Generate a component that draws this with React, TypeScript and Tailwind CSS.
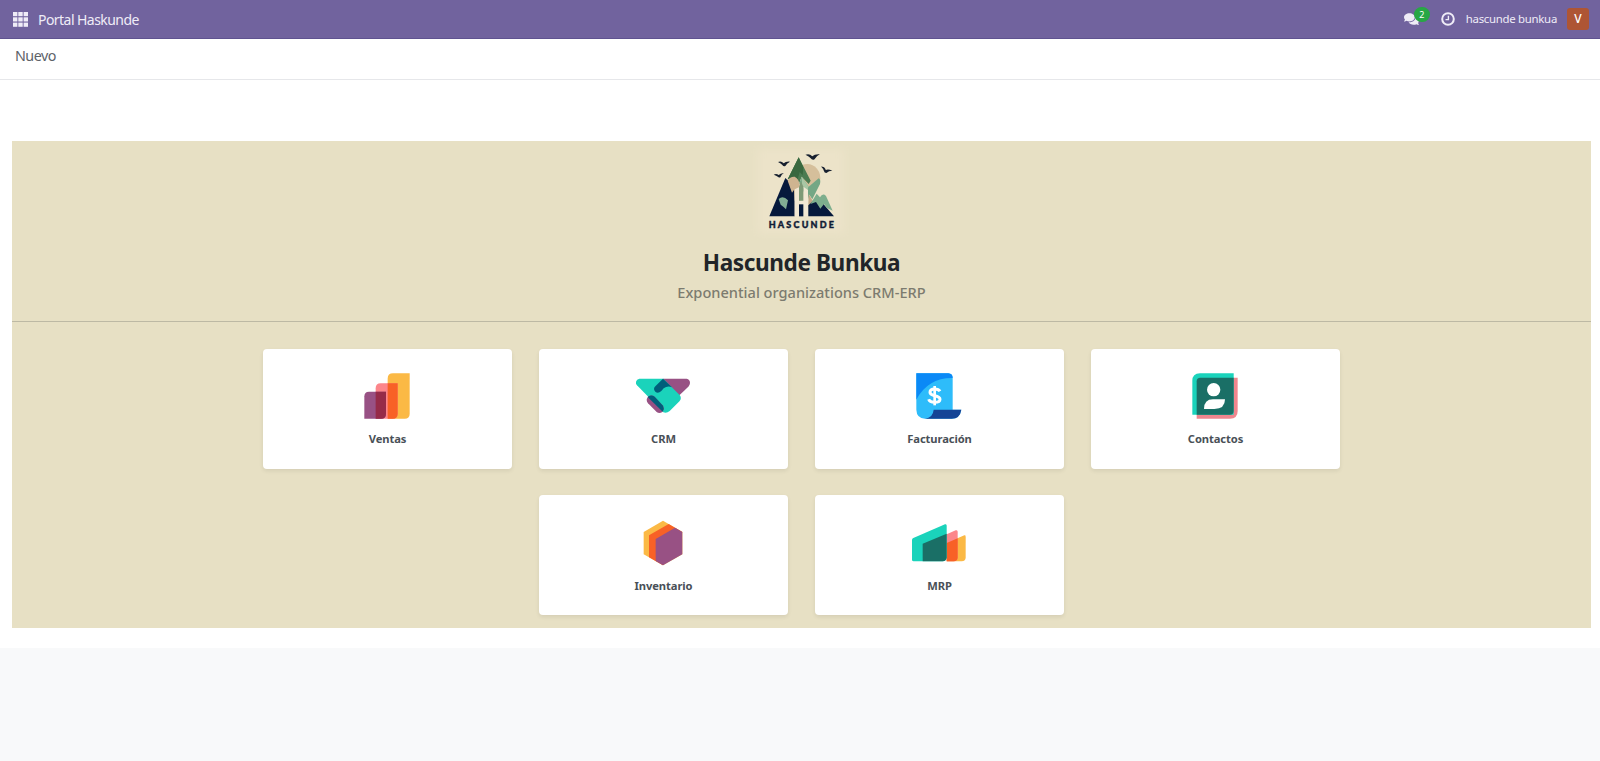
import type { ReactNode } from "react";
import { FaComments } from "react-icons/fa";

function Logo() {
  const bird = "M-18 -5 Q-8 -9 -1 -1 Q5 -7 18 -6 Q9 -2 4 7 Q-2 9 -5 4 Q-9 -1 -18 -5Z";
  return (
    <svg className="mr-px h-[100px] w-[100px]" viewBox="35 3 300 300" aria-label="Hascunde">
      <defs>
        <filter id="soft" x="-10%" y="-10%" width="120%" height="120%">
          <feGaussianBlur stdDeviation="12" />
        </filter>
      </defs>
      <rect x="56" y="26" width="258" height="254" fill="#ece3c9" filter="url(#soft)" />
      <path d="M188 75 Q215 66 233 86 Q246 102 242 122 L207 142 L186 110Z" fill="#d5bf9b" />
      <path d="M178 52 L145 118 L164 112 L180 128 L187 110 L208 132 L214 122Z" fill="#4b7b51" />
      <path d="M178 52 L145 118 L164 112 L175 118 L181 96 L190 106 L192 82Z" fill="#39683f" />
      <path d="M138 114 L90 229 L166 229 L166 140Z" fill="#06193c" />
      <path d="M145 122 Q152 109 166 110 Q180 116 182 140 L186 182 H166 L164 150 L158 158Z" fill="#cfb490" />
      <path d="M187 110 L208 140 L238 115 Q245 118 242 132 L219 178 L210 164 L206 178 L190 150 L180 130Z" fill="#74a785" />
      <path d="M187 110 L207 139 L204 160 L188 138Z" fill="#a9c7a5" />
      <path d="M208 162 L220 182 L207 204Z" fill="#c2a988" />
      <path d="M207 196 L224 180 L240 178 L284 229 H207Z" fill="#06193c" />
      <path d="M213 192 L222 178 L232 161 L242 172 Q250 158 260 168 L280 212 L263 204 L254 192 L243 206 L230 186Z" fill="#7dae8d" />
      <path d="M118 177 Q131 165 146 181 L140 208 L132 200 L124 194Z" fill="#82ae94" />
      <path d="M166 148 L179 142 V182 H192 V140 L206 150 V229 H192 V193 H179 V229 H166Z" fill="#f2e8d4" />
      <path d="M179 142 L185 124 L192 140 V182 H179Z" fill="#7f9a77" />
      <path d="M179 193 H192 V229 H179Z" fill="#06193c" />
      <g fill="#17202f">
        <path d={bird} transform="translate(134 71)" />
        <path d={bird} transform="translate(220 50) scale(1.2)" />
        <path d={bird} transform="translate(119 106) scale(.85) rotate(-8)" />
        <path d={bird} transform="translate(260 91) rotate(22)" />
      </g>
      <text
        x="88" y="265" textLength="196" lengthAdjust="spacing" fontSize="27" fontWeight="900"
        fill="#111c36" fontFamily="Lato, 'Open Sans', sans-serif" stroke="#111c36" strokeWidth="1.2"
      >
        HASCUNDE
      </text>
    </svg>
  );
}

function SalesIcon() {
  return (
    <svg className="size-[54px]" viewBox="331 88 162 162">
      <path d="M430 101 H480 V222 Q480 237 465 237 H414 V117 Q414 101 430 101Z" fill="#fbb945" />
      <path d="M393 131 H444 V222 Q444 237 429 237 H378 V146 Q378 131 393 131Z" fill="#fc868b" />
      <path d="M414 131 H444 V222 Q444 237 429 237 H414Z" fill="#f86126" />
      <path d="M358 156 H409 V222 Q409 237 394 237 H344 V170 Q344 156 358 156Z" fill="#985184" />
      <path d="M378 156 H409 V222 Q409 237 394 237 H378Z" fill="#962b48" />
    </svg>
  );
}

function CrmIcon() {
  return (
    <svg className="size-[54px]" viewBox="109 58 162 162">
      <path d="M190 87 H261 Q271 89 271 100 Q271 105 266 111 L236 140Z" fill="#985184" />
      <path d="M119 87 H191 L240 136 Q247 145 240 154 L210 184 Q201 192 191 188 L112 107 Q108 102 109 96 Q111 88 119 87Z" fill="#1ad3bb" />
      <path d="M145 141 Q155 134 165 141 L190 168 Q196 178 188 187 Q179 193 171 187 L145 161 Q137 151 145 141Z" fill="#985184" />
      <path d="M145 141 Q155 134 165 141 L190 168 Q195 177 189 186 L144 142Z" fill="#005e7a" />
      <path d="M190 87 L217 113 Q204 107 192 116 L185 124 Q175 133 167 126 Q159 118 167 110Z" fill="#005e7a" />
    </svg>
  );
}

function InvoicingIcon() {
  return (
    <svg className="size-[54px]" viewBox="97 58 162 162">
      <path d="M110 71 H206 Q219 72 219 85 V180 H245 Q240 207 216 207 H136 Q111 206 110 180Z" fill="#2ebcfa" />
      <path d="M110 71 H206 Q219 72 219 85 Q145 84 110 150Z" fill="#0b89f6" />
      <path d="M162 180 H245 Q241 207 216 207 H136 Q160 204 162 180Z" fill="#144496" />
      <g fill="none" stroke="#fff" strokeWidth="9">
        <path d="M181 125 Q177 118 165 118 Q151 118 151 128 Q151 135 165 138 Q181 141 181 149 Q181 158 165 158 Q150 158 147 149" />
        <path d="M165 109 V167" strokeWidth="8" />
      </g>
    </svg>
  );
}

function ContactsIcon() {
  return (
    <svg className="size-[54px]" viewBox="115 58 162 162">
      <path d="M141 84 H264 V184 Q264 207 241 207 H141Z" fill="#f0868e" />
      <path d="M151 71 H252 V195 H128 V94 Q128 71 151 71Z" fill="#1ad3bb" />
      <path d="M152 84 H252 V183 Q252 195 240 195 H141 V95 Q141 84 152 84Z" fill="#1a6f66" />
      <circle cx="192" cy="120" r="20" fill="#fff" />
      <path d="M190 149 H226 Q226 178 194 178 H163 Q163 149 190 149Z" fill="#fff" />
    </svg>
  );
}

function InventoryIcon() {
  return (
    <svg className="size-[54px]" viewBox="109 77 162 162">
      <path d="M190 91 L248 125 V192 L190 225 L132 192 V125Z" fill="#fbb945" />
      <path d="M207 101 L248 125 L190 225 L148 201 V135Z" fill="#f86126" />
      <path d="M226 112 L248 125 V192 L190 225 L168 212 V146Z" fill="#985184" />
    </svg>
  );
}

function MrpIcon() {
  return (
    <svg className="size-[54px]" viewBox="97 77 162 162">
      <path d="M201 158 L254 135 Q258 134 258 139 V201 Q258 213 246 213 H201Z" fill="#fbb945" />
      <path d="M201 132 L228 120 Q234 118 234 124 V201 Q234 213 222 213 H201Z" fill="#fc868b" />
      <path d="M201 158 L234 144 V201 Q234 213 222 213 H201Z" fill="#f86126" />
      <path d="M101 143 L196 102 Q201 100 201 106 V201 Q200 213 189 213 H102 Q97 213 97 208 V149 Q97 145 101 143Z" fill="#1ad3bb" />
      <path d="M129 160 L201 130 V201 Q200 213 189 213 H129Z" fill="#1a6f66" />
    </svg>
  );
}

function AppCard({ label, icon }: { label: string; icon: ReactNode }) {
  return (
    <a className="flex h-[119.5px] w-[249.5px] flex-col items-center rounded-[4px] bg-white pt-[20.4px] shadow-[0_2px_4px_rgba(0,0,0,0.08)]">
      <span className="mr-px">{icon}</span>
      <span className="mt-[7px] text-[11.2px] leading-[18px] font-bold tracking-[-0.1px] text-[#495057]">{label}</span>
    </a>
  );
}

function NavBar() {
  return (
    <header className="flex h-[39px] items-center border-b border-[#5f5390] bg-[#71639e] pr-[11px] pl-[13px] text-[#efecf7]">
      <svg className="size-[15px]" viewBox="0 0 15 15" fill="currentColor">
        {[0, 5.3, 10.6].map((y) =>
          [0, 5.3, 10.6].map((x) => <rect key={`${x}-${y}`} x={x} y={y} width="4.4" height="4.2" />),
        )}
      </svg>
      <span className="ml-[10px] pt-px text-[14px] tracking-[-0.55px]">Portal Haskunde</span>
      <div className="ml-auto flex items-center">
        <div className="relative">
          <FaComments className="h-[14px] w-[15px]" />
          <span className="absolute -top-[5px] left-[10px] flex h-[15px] w-[16px] items-center justify-center rounded-full bg-[#28a745] text-[9px] text-white">
            2
          </span>
        </div>
        <svg className="ml-[22px] size-[14px]" viewBox="0 0 14 14" fill="none" stroke="currentColor">
          <circle cx="7" cy="7" r="5.8" strokeWidth="2" />
          <path d="M7.4 3.8 V7.6 H4.5" strokeWidth="1.4" />
        </svg>
        <span className="ml-[11px] text-[11.4px] tracking-[-0.28px]">hascunde bunkua</span>
        <span className="ml-[10px] flex size-[22px] items-center justify-center rounded-[3px] bg-[#ae5534] text-[12px] font-medium text-white">V</span>
      </div>
    </header>
  );
}

export default function App() {
  return (
    <div className="flex h-[761px] flex-col overflow-hidden bg-[#f8f9fa] font-['Noto_Sans','Open_Sans',sans-serif]">
      <NavBar />
      <div className="h-[41px] border-b border-[#e6e7ea] bg-white pt-[5px] pl-[15px] text-[14.3px] leading-6 tracking-[-0.5px] text-[#5d6268]">
        Nuevo
      </div>
      <main className="bg-white pt-[61px] pr-[9px] pb-5 pl-3">
        <section className="flex h-[487px] flex-col items-center bg-[#e7e0c4]">
          <Logo />
          <h1 className="mt-[4px] text-[22.6px] leading-9 font-bold tracking-[-0.4px] text-[#212529]">Hascunde Bunkua</h1>
          <h2 className="mt-px text-[14.6px] leading-5 font-medium tracking-normal text-[#7c7b6f]">Exponential organizations CRM-ERP</h2>
          <hr className="mt-[19px] w-full border-[#bdb9a4]" />
          <div className="mt-[27px] flex w-[1104px] flex-wrap justify-center gap-x-[26.5px] gap-y-[26.7px]">
            <AppCard label="Ventas" icon={<SalesIcon />} />
            <AppCard label="CRM" icon={<CrmIcon />} />
            <AppCard label="Facturación" icon={<InvoicingIcon />} />
            <AppCard label="Contactos" icon={<ContactsIcon />} />
            <AppCard label="Inventario" icon={<InventoryIcon />} />
            <AppCard label="MRP" icon={<MrpIcon />} />
          </div>
        </section>
      </main>
    </div>
  );
}
